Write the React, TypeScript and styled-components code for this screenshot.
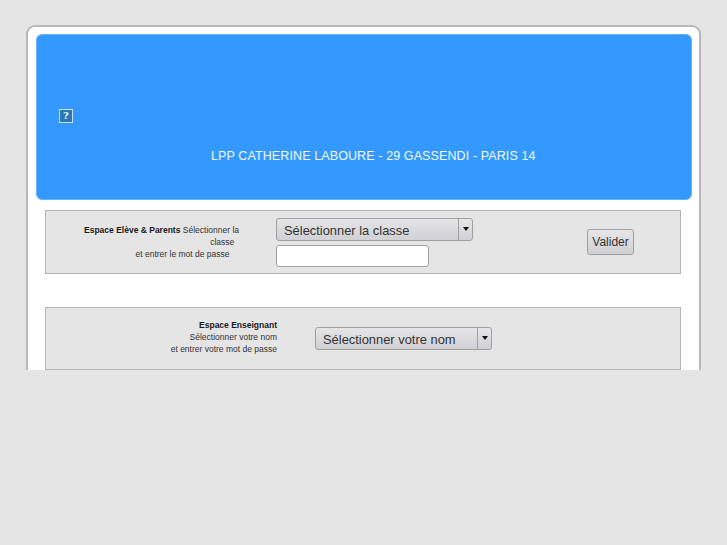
import React from 'react';
import styled, { createGlobalStyle } from 'styled-components';

const GlobalStyle = createGlobalStyle`
  html, body {
    margin: 0;
    height: 100%;
    background: #e5e5e5;
    font-family: "Liberation Sans", Arial, sans-serif;
  }
`;

const Page = styled.div`
  box-sizing: border-box;
  height: 545px;
  padding: 25px 26px 0;
  overflow: hidden;
`;

const Card = styled.div`
  box-sizing: border-box;
  width: 675px;
  height: 345px;
  padding: 7px 7px 0 8px;
  background: #fff;
  border: 2px solid #b8b8b8;
  border-bottom: 0;
  border-radius: 9px 9px 0 0;
  overflow: hidden;
`;

const Banner = styled.div`
  box-sizing: border-box;
  height: 166px;
  padding: 74px 0 0 22px;
  background: #3399ff;
  border: 1px solid #66b2ff;
  border-radius: 6px;
  color: #fff;
`;

const BrokenImage = styled.div`
  box-sizing: border-box;
  display: flex;
  align-items: center;
  justify-content: center;
  width: 14px;
  height: 14px;
  background: #2a78b8;
  border: 1px solid #cfdfee;
  font: bold 9px "DejaVu Serif", serif;
  color: #fff;
`;

const BannerTitle = styled.div`
  margin: 26px 0 0 152px;
  font-size: 12.5px;
  line-height: 15px;
  letter-spacing: 0.11px;
  color: #f2f8ff;
  white-space: nowrap;
`;

const Panel = styled.div<{ $top: number; $height: number; $columns: string }>`
  box-sizing: border-box;
  display: grid;
  grid-template-columns: ${(p) => p.$columns};
  align-items: center;
  width: 636px;
  height: ${(p) => p.$height}px;
  margin: ${(p) => p.$top}px 0 0 9px;
  background: #e5e5e5;
  border: 1px solid #b4b4b4;
`;

const Label = styled.div<{ $lift?: number }>`
  margin-bottom: ${(p) => p.$lift ?? 0}px;
  font-size: 8.5px;
  line-height: 12px;
  color: #333;
  text-align: right;
  white-space: pre-wrap;
`;

const Strong = styled.b`
  color: #1a1a1a;
`;

const Fields = styled.div<{ $indent: number; $lift?: number }>`
  display: flex;
  flex-direction: column;
  gap: 4px;
  margin: 0 0 ${(p) => p.$lift ?? 0}px ${(p) => p.$indent}px;
`;

const Select = styled.div<{ $width: number }>`
  box-sizing: border-box;
  display: flex;
  width: ${(p) => p.$width}px;
  height: 23px;
  background: linear-gradient(#e6e6e8, #d0d0d5);
  border: 1px solid #a0a0a0;
  border-radius: 3px;
  font-size: 12.9px;
  color: #333;
`;

const SelectText = styled.div`
  flex: 1;
  padding: 1px 0 0 7px;
  line-height: 21px;
`;

const SelectArrow = styled.div`
  display: flex;
  align-items: center;
  justify-content: center;
  width: 13px;
  border-left: 1px solid #a0a0a0;

  &::after {
    content: '';
    border: 3.5px solid transparent;
    border-top: 4px solid #111;
    border-bottom: 0;
  }
`;

const TextInput = styled.input`
  box-sizing: border-box;
  width: 153px;
  height: 22px;
  background: #fff;
  border: 1px solid #a0a0a0;
  border-radius: 3px;
`;

const Button = styled.button`
  box-sizing: border-box;
  width: 47px;
  height: 26px;
  padding: 0;
  background: linear-gradient(#e6e6e8, #d0d0d5);
  border: 1px solid #a0a0a0;
  border-radius: 3px;
  font: 12px "Liberation Sans", Arial, sans-serif;
  color: #333;
`;

export default function App() {
  return (
    <Page>
      <GlobalStyle />
      <Card>
        <Banner>
          <BrokenImage>?</BrokenImage>
          <BannerTitle>LPP CATHERINE LABOURE - 29 GASSENDI - PARIS 14</BannerTitle>
        </Banner>
        <Panel $top={10} $height={64} $columns="193px 230px 118px 47px 1fr">
          <Label>
            <Strong>Espace Elève &amp; Parents</Strong> Sélectionner la{'\n'}classe{'\u00a0\u00a0'}{'\n'}et entrer le mot de passe{'\u00a0\u00a0\u00a0\u00a0'}
          </Label>
          <Fields $indent={37}>
            <Select $width={197}>
              <SelectText>Sélectionner la classe</SelectText>
              <SelectArrow />
            </Select>
            <TextInput type="text" />
          </Fields>
          <div />
          <Button>Valider</Button>
          <div />
        </Panel>
        <Panel $top={33} $height={63} $columns="231px 1fr">
          <Label $lift={3}>
            <Strong>Espace Enseignant</Strong>{'\n'}Sélectionner votre nom{'\n'}et entrer votre mot de passe
          </Label>
          <Fields $indent={38} $lift={1}>
            <Select $width={177}>
              <SelectText>Sélectionner votre nom</SelectText>
              <SelectArrow />
            </Select>
          </Fields>
        </Panel>
      </Card>
    </Page>
  );
}
